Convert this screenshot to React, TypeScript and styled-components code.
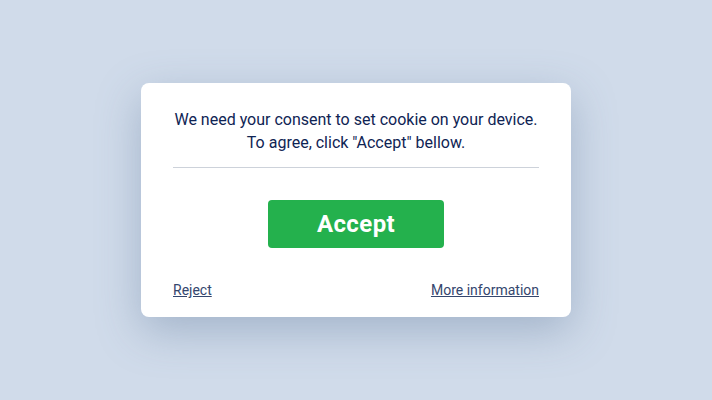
import React from "react";
import styled, { createGlobalStyle } from "styled-components";

const Global = createGlobalStyle`
  html, body { margin: 0; padding: 0; }
  body {
    background: #d0dbea;
    font-family: Roboto, "Liberation Sans", sans-serif;
  }
`;

const Page = styled.div`
  width: 712px;
  height: 400px;
  display: flex;
  align-items: center;
  justify-content: center;
`;

const Card = styled.div`
  width: 430px;
  box-sizing: border-box;
  background: #ffffff;
  border-radius: 8px;
  padding: 25px 32px 17px;
  box-shadow: 0 14px 44px rgba(90, 115, 150, 0.38);
  display: flex;
  flex-direction: column;
`;

const Message = styled.p`
  margin: 0;
  text-align: center;
  font-size: 16px;
  line-height: 23px;
  color: #0f2454;
  padding-bottom: 13px;
  border-bottom: 1px solid #cdd2da;
`;

const ButtonRow = styled.div`
  display: flex;
  justify-content: center;
  padding: 32px 0 32px;
`;

const AcceptButton = styled.button`
  width: 176px;
  height: 48px;
  border: none;
  border-radius: 4px;
  background: #24b14d;
  color: #ffffff;
  font-family: Roboto, "Liberation Sans", sans-serif;
  font-weight: 700;
  font-size: 24px;
  letter-spacing: 0.4px;
  cursor: pointer;
`;

const Links = styled.div`
  display: flex;
  justify-content: space-between;
  align-items: center;
`;

const TextLink = styled.a`
  font-size: 14px;
  line-height: 20px;
  color: #34466e;
  text-decoration: underline;
  cursor: pointer;
`;

export default function App() {
  return (
    <>
      <Global />
      <Page>
        <Card>
          <Message>
            We need your consent to set cookie on your device.
            <br />
            To agree, click "Accept" bellow.
          </Message>
          <ButtonRow>
            <AcceptButton>Accept</AcceptButton>
          </ButtonRow>
          <Links>
            <TextLink>Reject</TextLink>
            <TextLink>More information</TextLink>
          </Links>
        </Card>
      </Page>
    </>
  );
}
